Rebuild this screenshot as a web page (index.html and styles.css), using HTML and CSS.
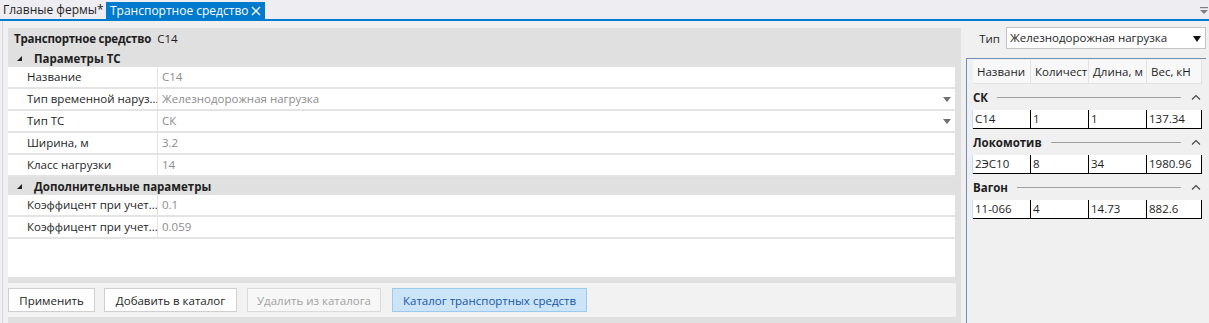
FILE: index.html
```html
<!DOCTYPE html>
<html lang="ru">
<head>
<meta charset="utf-8">
<title>Транспортное средство</title>
<link rel="stylesheet" href="styles.css">
</head>
<body>
<div class="tabbar">
  <div class="tab">Главные фермы*</div>
  <div class="tab active">Транспортное средство <span class="close">
    <svg width="10" height="10" viewBox="0 0 10 10"><path d="M1 1 L9 9 M9 1 L1 9" stroke="#fff" stroke-width="1.3"/></svg></span></div>
  <div class="tabbar-fill"></div>
  <div class="tab-menu"><svg width="8" height="10" viewBox="0 0 8 10"><rect x="0" y="3" width="8" height="1.2" fill="#808080"/><path d="M0 6 L8 6 L4 10 Z" fill="#808080"/></svg></div>
</div>
<div class="main">
  <div class="workspace">
    <div class="left">
      <div class="title"><b>Транспортное средство</b> <span>С14</span></div>
      <div class="pgrid">
        <div class="cat"><span class="tri"></span>Параметры ТС</div>
        <div class="prow"><div class="plabel">Название</div><div class="pval">С14</div></div>
        <div class="prow"><div class="plabel">Тип временной наруз...</div><div class="pval">Железнодорожная нагрузка<span class="dd"></span></div></div>
        <div class="prow"><div class="plabel">Тип ТС</div><div class="pval">СК<span class="dd"></span></div></div>
        <div class="prow"><div class="plabel">Ширина, м</div><div class="pval">3.2</div></div>
        <div class="prow"><div class="plabel">Класс нагрузки</div><div class="pval">14</div></div>
        <div class="cat"><span class="tri"></span>Дополнительные параметры</div>
        <div class="prow"><div class="plabel">Коэффицент при учет...</div><div class="pval">0.1</div></div>
        <div class="prow"><div class="plabel">Коэффицент при учет...</div><div class="pval">0.059</div></div>
        <div class="pempty"></div>
      </div>
      <div class="btnbar">
        <button class="btn b1">Применить</button>
        <button class="btn b2">Добавить в каталог</button>
        <button class="btn b3 disabled">Удалить из каталога</button>
        <button class="btn b4 primary">Каталог транспортных средств</button>
      </div>
    </div>
    <div class="right">
      <div class="typerow">
        <span class="typelabel">Тип</span>
        <div class="combo">Железнодорожная нагрузка<span class="carrow"></span></div>
      </div>
      <div class="dgrid">
        <div class="dhead">
          <div class="rh"></div>
          <div class="hc">Названи</div>
          <div class="hc">Количест</div>
          <div class="hc">Длина, м</div>
          <div class="hc last">Вес, кН</div>
        </div>
        <div class="group"><span class="gname">СК</span><span class="gline"></span><span class="chev"><svg width="10" height="6" viewBox="0 0 10 6"><path d="M1 5.5 L5 1.5 L9 5.5" fill="none" stroke="#444" stroke-width="1.1"/></svg></span></div>
        <div class="drow"><div class="rh"></div><div class="dc">С14</div><div class="dc">1</div><div class="dc">1</div><div class="dc">137.34</div></div>
        <div class="group"><span class="gname">Локомотив</span><span class="gline"></span><span class="chev"><svg width="10" height="6" viewBox="0 0 10 6"><path d="M1 5.5 L5 1.5 L9 5.5" fill="none" stroke="#444" stroke-width="1.1"/></svg></span></div>
        <div class="drow"><div class="rh"></div><div class="dc">2ЭС10</div><div class="dc">8</div><div class="dc">34</div><div class="dc">1980.96</div></div>
        <div class="group"><span class="gname">Вагон</span><span class="gline"></span><span class="chev"><svg width="10" height="6" viewBox="0 0 10 6"><path d="M1 5.5 L5 1.5 L9 5.5" fill="none" stroke="#444" stroke-width="1.1"/></svg></span></div>
        <div class="drow"><div class="rh"></div><div class="dc">11-066</div><div class="dc">4</div><div class="dc">14.73</div><div class="dc">882.6</div></div>
      </div>
    </div>
  </div>
</div>
</body>
</html>
```
FILE: styles.css
```css
* { box-sizing: border-box; }
html, body { margin: 0; padding: 0; }
body {
  width: 1209px;
  height: 323px;
  overflow: hidden;
  background: #f0f0f0;
  font-family: "Open Sans", "Noto Sans", sans-serif;
  font-size: 11.5px;
  color: #1e1e1e;
}
.tabbar {
  height: 21px;
  background: #eeeef2;
  border-bottom: 2px solid #007acc;
  display: flex;
  align-items: flex-end;
}
.tab {
  height: 17px;
  line-height: 16px;
  padding: 0 0 0 3px;
  width: 106px;
  white-space: nowrap;
  font-size: 12px;
}
.tab.active {
  background: #007acc;
  color: #fff;
  padding: 0 3px 0 4px;
  width: 159px;
  display: flex;
  align-items: center;
  justify-content: space-between;
}
.close { display: flex; align-items: center; margin-right: 1px; }
.tabbar-fill { flex: 1; }
.tab-menu { align-self: flex-start; padding: 2px 1px 0 0; }

.main { height: 302px; padding-left: 2px; }
.workspace {
  height: 100%;
  display: flex;
  border-left: 1px solid #d4d6e2;
  padding-left: 5px;
}
.left {
  width: 953px;
  margin-top: 7px;
  background: #e0e0e0;
  display: flex;
  flex-direction: column;
}
.title {
  height: 21px;
  padding: 3px 0 0 6px;
  white-space: nowrap;
}
.title b { font-weight: 700; letter-spacing: -0.2px; }
.title span { margin-left: 3px; }
.pgrid {
  width: 947px;
  height: 228px;
  display: flex;
  flex-direction: column;
}
.cat {
  height: 18px;
  line-height: 17px;
  font-weight: 700;
  display: flex;
  align-items: center;
  padding-left: 9px;
}
.tri {
  width: 0; height: 0;
  border-left: 5px solid transparent;
  border-bottom: 5px solid #222;
  margin-right: 12px;
  margin-top: 1px;
}
.prow {
  height: 22px;
  display: flex;
  border-bottom: 2px solid #e4e4e4;
  background: #fff;
}
.plabel {
  width: 150px;
  padding-left: 19px;
  line-height: 20px;
  border-right: 1px solid #e4e4e4;
  white-space: nowrap;
  overflow: hidden;
}
.pval {
  flex: 1;
  padding-left: 4px;
  line-height: 20px;
  color: #8c8c8c;
  position: relative;
}
.dd {
  position: absolute;
  right: 4px;
  top: 8px;
  width: 0; height: 0;
  border-left: 4px solid transparent;
  border-right: 4px solid transparent;
  border-top: 5px solid #707070;
}
.pempty { flex: 1; background: #fff; }
.btnbar {
  margin-top: 6px;
  width: 948px;
  height: 34px;
  background: #f2f2f2;
  display: flex;
  align-items: center;
  gap: 9px;
}
.btn {
  height: 24px;
  font-family: inherit;
  font-size: 11.5px;
  color: #1e1e1e;
  background: #fff;
  border: 1px solid #cfcfcf;
  padding: 0;
  white-space: nowrap;
}
.b1 { width: 87px; }
.b2 { width: 133px; }
.b3 { width: 134px; margin-left: 1px; }
.b4 { width: 195px; margin-left: 2px; }
.btn.disabled { color: #a2a2a2; background: #f7f7f7; border-color: #dadada; }
.btn.primary { background: #cce4f7; border-color: #9ccaef; color: #1457a8; }

.right {
  flex: 1;
  display: flex;
  flex-direction: column;
  padding: 6px 3px 0 5px;
}
.typerow {
  display: flex;
  align-items: center;
  justify-content: flex-end;
  height: 22px;
  gap: 6px;
}
.combo {
  width: 200px;
  height: 22px;
  background: #fff;
  border: 1px solid #c4c4c4;
  padding-left: 3px;
  line-height: 20px;
  position: relative;
  white-space: nowrap;
}
.carrow {
  position: absolute;
  right: 4px;
  top: 8px;
  width: 0; height: 0;
  border-left: 4px solid transparent;
  border-right: 4px solid transparent;
  border-top: 6px solid #111;
}
.dgrid {
  margin-top: 9px;
  flex: 1;
  border-top: 1px solid #6f8fb8;
  border-left: 1px solid #6f8fb8;
  padding-top: 1px;
}
.dhead { display: flex; height: 24px; }
.dhead .rh { width: 6px; }
.hc {
  width: 58px;
  background: #f8f8f8;
  border-right: 1px solid #e2e2e2;
  border-bottom: 1px solid #e2e2e2;
  padding-left: 4px;
  line-height: 23px;
  white-space: nowrap;
  overflow: hidden;
}
.hc.last { width: 55px; }
.group {
  height: 26px;
  display: flex;
  align-items: center;
  padding: 0 5px 0 6px;
  font-weight: 700;
}
.gline { flex: 1; height: 1px; background: #a0a0a0; margin: 0 10px 0 9px; }
.chev { display: flex; align-items: center; }
.drow { display: flex; height: 19px; }
.drow .rh { width: 6px; border-right: 1px solid #bfe0f5; background: #f0f0f0; }
.dc {
  width: 58px;
  background: #fff;
  border-right: 1px solid #000;
  border-bottom: 1px solid #000;
  padding-left: 2px;
  line-height: 18px;
  white-space: nowrap;
}
.dc:last-child { width: 55px; }
```
